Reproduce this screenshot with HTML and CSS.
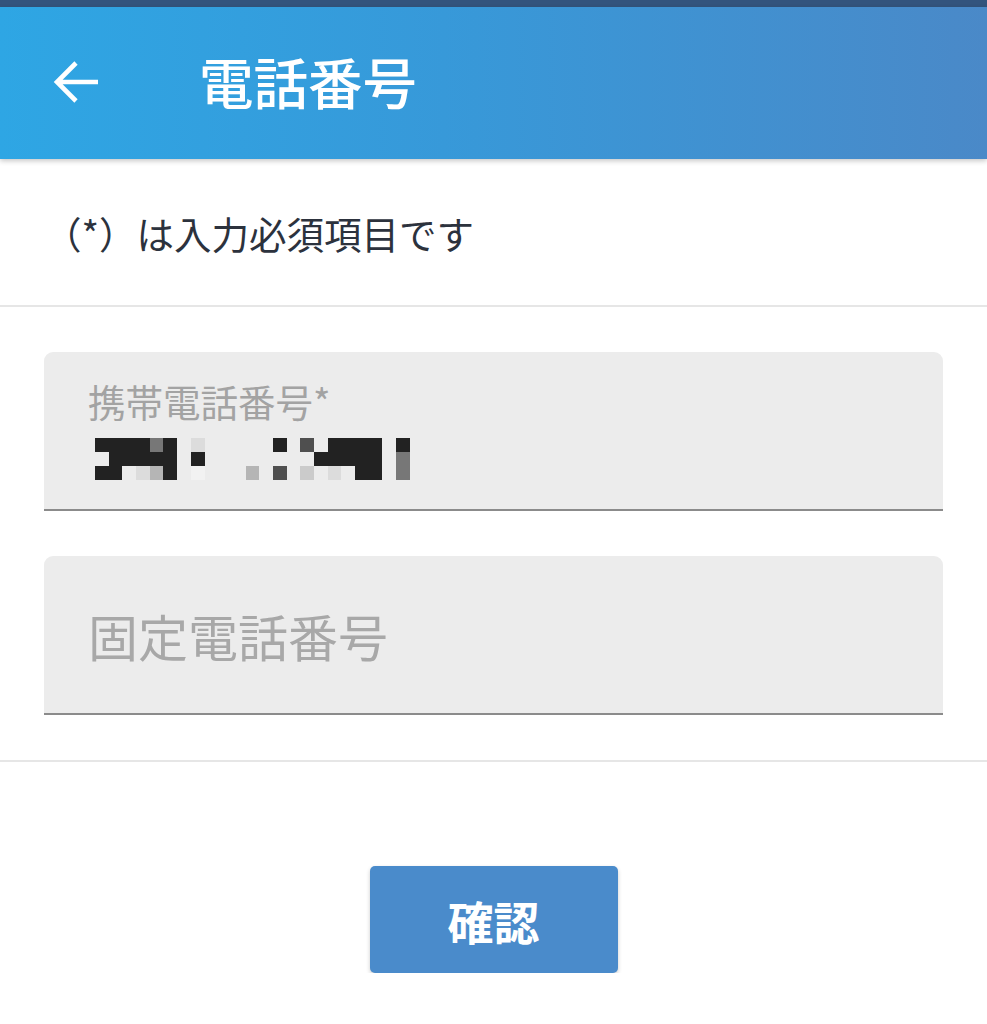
FILE: index.html
```html
<!DOCTYPE html>
<html lang="ja">
<head>
<meta charset="utf-8">
<title>電話番号</title>
<link rel="stylesheet" href="styles.css">
</head>
<body>
<div class="statusbar"></div>
<header class="appbar">
  <button class="back" aria-label="戻る">
    <svg width="48" height="44" viewBox="0 0 48 44"><path d="M45 22H5M23 3L4 22l19 19" fill="none" stroke="#fff" stroke-width="4.6" stroke-linecap="butt" stroke-linejoin="miter"/></svg>
  </button>
  <h1 class="title">電話番号</h1>
</header>
<main>
  <p class="note">（*）は入力必須項目です</p>
  <section class="fields">
    <div class="field">
      <div class="label">携帯電話番号*</div>
      <div class="mosaic">
        <i class="k"></i><i class="k"></i><i class="k"></i><i class="k"></i><i class="g5"></i><i class="k"></i><i></i><i class="g1"></i><i></i><i></i><i></i><i></i><i></i><i class="k"></i><i></i><i class="g6"></i><i></i><i class="k"></i><i class="k"></i><i class="k"></i><i class="k"></i><i></i><i class="k"></i>
        <i></i><i class="k"></i><i class="k"></i><i class="k"></i><i class="k"></i><i class="k"></i><i></i><i class="k"></i><i></i><i></i><i></i><i></i><i></i><i></i><i></i><i></i><i class="k"></i><i class="k"></i><i class="k"></i><i class="k"></i><i class="k"></i><i></i><i class="g5"></i>
        <i class="k"></i><i class="k"></i><i></i><i class="g1"></i><i class="g3"></i><i class="k"></i><i></i><i class="g0"></i><i></i><i></i><i></i><i class="g3"></i><i></i><i class="g6"></i><i></i><i class="g2"></i><i></i><i class="g1"></i><i></i><i class="k"></i><i class="k"></i><i></i><i class="g5"></i>
      </div>
    </div>
    <div class="field field-empty">
      <div class="placeholder">固定電話番号</div>
    </div>
  </section>
  <div class="actions">
    <button class="confirm">確認</button>
  </div>
</main>
</body>
</html>
```
FILE: styles.css
```css
html, body {
  margin: 0;
  padding: 0;
  background: #fff;
  font-family: "Noto Sans CJK JP", "Noto Sans", sans-serif;
}
.statusbar {
  height: 7px;
  background: #33547d;
}
.appbar {
  height: 152px;
  display: flex;
  align-items: center;
  background: linear-gradient(90deg, #2ea6e4 0%, #3799d9 45%, #4a89c8 100%);
  box-shadow: 0 2px 5px rgba(0,0,0,0.22);
  position: relative;
  z-index: 1;
}
.back {
  margin-left: 53px;
  padding: 0;
  border: 0;
  background: none;
  width: 48px;
  height: 44px;
  display: flex;
  margin-top: -2px;
}
.title {
  margin: 0 0 0 98px;
  color: #fff;
  font-size: 54.5px;
  font-weight: 500;
  line-height: 1;
  margin-top: -4px;
}
.note {
  margin: 0;
  padding: 0 0 0 44px;
  height: 146px;
  display: flex;
  align-items: center;
  font-size: 37.5px;
  color: #2c323d;
  border-bottom: 2px solid #e6e6e6;
}
.fields {
  padding: 45px 44px 45px 44px;
  display: flex;
  flex-direction: column;
  gap: 45px;
  border-bottom: 2px solid #e6e6e6;
}
.field {
  height: 157px;
  background: #ececec;
  border-radius: 9px 9px 0 0;
  border-bottom: 2px solid #8b8b8b;
  padding: 0 0 0 44px;
  box-sizing: content-box;
}
.label {
  padding-top: 27px;
  font-size: 37.5px;
  line-height: 44px;
  color: #a3a3a3;
}
.mosaic {
  margin-top: 15px;
  margin-left: 7px;
  display: grid;
  grid-template-columns: repeat(23, 13.7px);
  grid-template-rows: repeat(3, 14px);
}
.mosaic i { display: block; }
.mosaic .k { background: #222; }
.mosaic .g0 { background: #f2f2f2; }
.mosaic .g1 { background: #dcdcdc; }
.mosaic .g2 { background: #cbcbcb; }
.mosaic .g3 { background: #b5b5b5; }
.mosaic .g5 { background: #777; }
.mosaic .g6 { background: #4f4f4f; }
.field-empty {
  display: flex;
  align-items: center;
}
.placeholder {
  font-size: 50px;
  color: #a8a8a8;
  line-height: 1;
  margin-top: 0;
}
.actions {
  display: flex;
  justify-content: center;
  padding-top: 104px;
}
.confirm {
  width: 248px;
  height: 107px;
  border: 0;
  border-radius: 5px;
  background: #4a8bcb;
  color: #fff;
  font-family: "Noto Sans CJK JP", sans-serif;
  font-size: 46px;
  font-weight: 700;
  box-shadow: 0 2px 4px rgba(0,0,0,0.2);
}
```
